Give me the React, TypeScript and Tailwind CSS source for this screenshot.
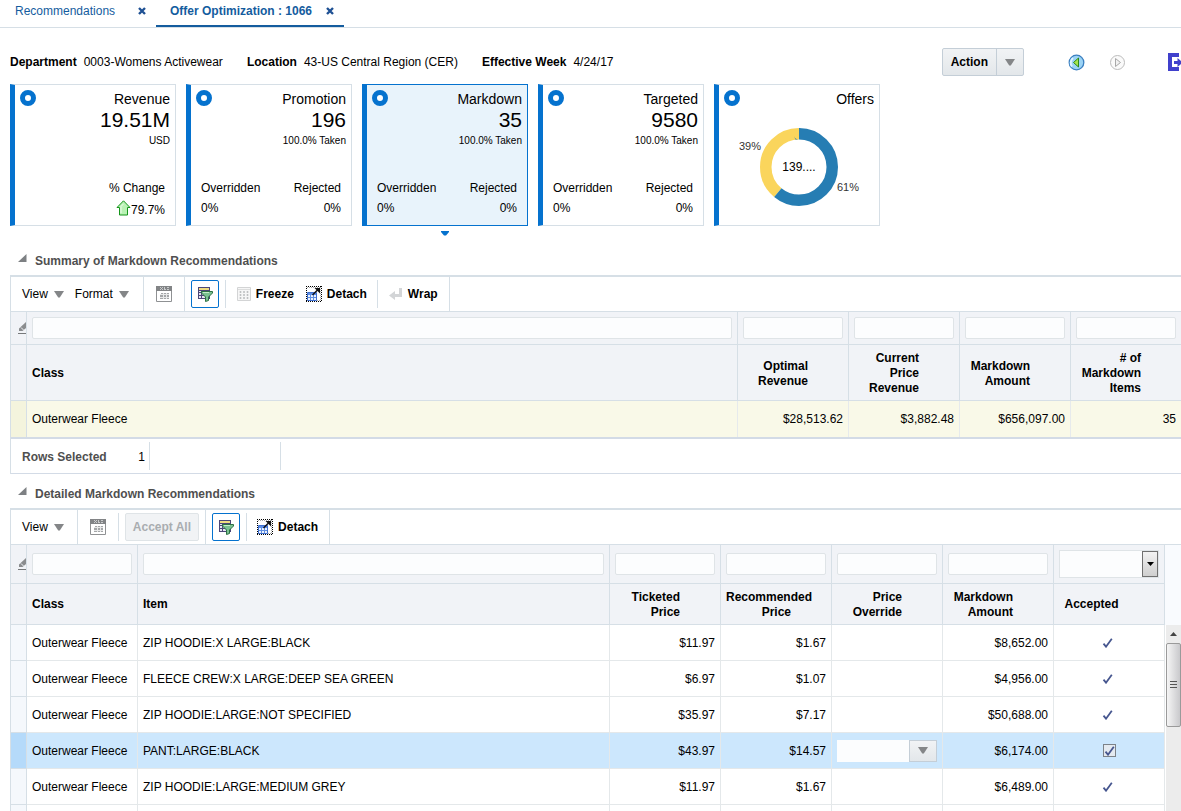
import type { ReactNode } from 'react'

interface StatCardProps {
  title: string
  value: string
  note: string
  selected?: boolean
  children?: ReactNode
}

interface DetailRow {
  item: string
  ticketed: string
  recommended: string
  amount: string
  selected?: boolean
}

const DETAIL_ROWS: DetailRow[] = [
  { item: 'ZIP HOODIE:X LARGE:BLACK', ticketed: '$11.97', recommended: '$1.67', amount: '$8,652.00' },
  { item: 'FLEECE CREW:X LARGE:DEEP SEA GREEN', ticketed: '$6.97', recommended: '$1.07', amount: '$4,956.00' },
  { item: 'ZIP HOODIE:LARGE:NOT SPECIFIED', ticketed: '$35.97', recommended: '$7.17', amount: '$50,688.00' },
  { item: 'PANT:LARGE:BLACK', ticketed: '$43.97', recommended: '$14.57', amount: '$6,174.00', selected: true },
  { item: 'ZIP HOODIE:LARGE:MEDIUM GREY', ticketed: '$11.97', recommended: '$1.67', amount: '$6,489.00' },
]

/* Icons */

function CloseIcon() {
  return (
    <svg width="8" height="8" viewBox="0 0 8 8" aria-hidden="true">
      <path d="M1 1 7 7M7 1 1 7" stroke="#1f5194" strokeWidth="2.4" />
    </svg>
  )
}

function CaretIcon() {
  return (
    <svg width="10" height="7" viewBox="0 0 10 7" aria-hidden="true">
      <path d="M0 0h10L5.8 6.5H4.2z" fill="#848688" />
    </svg>
  )
}

function DiscloseIcon() {
  return (
    <svg width="9" height="8" viewBox="0 0 9 8" aria-hidden="true">
      <path d="M8.5 0v8H0z" fill="#7d8083" />
    </svg>
  )
}

function ExportIcon() {
  return (
    <svg width="16" height="16" viewBox="0 0 16 16" aria-hidden="true">
      <path d="M0 0h16v5H0z" fill="#828486" />
      <path d="M4 1h1v1H4zM6 1h1v1H6zM4 3h1v1H4zM6 3h1v1H6zM5 2h1v1H5zM8 1h1v3H8zM9 3h1v1H9zM11 1h2v1h-2zM11 3h2v1h-2z" fill="#c9cbcc" />
      <path d="M.5 5v10.500h15V5" fill="#fff" stroke="#8f9193" />
      <path d="M5 7h8v6H4V9h1z" fill="#a4a6a8" />
      <path d="M7 7h1v6H7zM10 7h1v6h-1zM4 8h9v1H4zM4 11h9v1H4z" fill="#e8e9e9" />
    </svg>
  )
}

function QueryIcon() {
  return (
    <svg width="16" height="16" viewBox="0 0 16 16" aria-hidden="true">
      <path d="M1 1h12v12H1z" fill="#4b4677" />
      <path d="M2 2h10v2H2z" fill="#f0dc82" />
      <path d="M2 5h2v1H2zM5 5h3v1H5zM9 5h3v1H9zM2 7h2v2H2zM5 7h3v2H5zM2 10h2v2H2zM5 10h3v2H5z" fill="#e6e4f2" />
      <path d="M4.500 5.500h11v1.500L11.500 11v3.500l-3 1V11L4.500 7z" fill="#7bc191" stroke="#2c7043" />
      <path d="M6 6.500h6" stroke="#c5ecc9" />
    </svg>
  )
}

function FreezeIcon() {
  return (
    <svg width="14" height="14" viewBox="0 0 14 14" aria-hidden="true">
      <path d="M.5.5h13v13H.5z" fill="#f6f6f6" stroke="#d3d4d5" />
      <path d="M1 2.500h12" stroke="#dcdddd" />
      <path d="M3.500 4v8M7 4v8M10.500 4v8" stroke="#bfc1c2" strokeWidth="1.600" strokeDasharray="2 1" />
    </svg>
  )
}

function DetachIcon() {
  return (
    <svg width="16" height="16" viewBox="0 0 16 16" aria-hidden="true">
      <path d="M0 .5h16M0 15.500h16M.5 0v16M15.500 0v16" stroke="#000" strokeDasharray="1 1" />
      <path d="M1 1.500h14M1 14.500h14M14.500 1v14" stroke="#000" strokeOpacity=".35" strokeDasharray="1 1" />
      <path d="M1.500 6.500h9v8h-9z" fill="#eaf2ff" stroke="#3e6fd0" />
      <path d="M2 7h8v2H2z" fill="#5b8de6" />
      <path d="M4.500 9v5M7.500 9v5M2 11.500h8" stroke="#5f8ee0" />
      <path d="M6.500 9 12 3.500" stroke="#111" strokeWidth="1.500" />
      <path d="M8.500 2H14v5.500z" fill="#111" />
    </svg>
  )
}

function WrapIcon() {
  return (
    <svg width="14" height="14" viewBox="0 0 14 14" aria-hidden="true">
      <path d="M10 1h3v9H6v3L0 8.500 6 4v3h4z" fill="#d3d5d7" />
    </svg>
  )
}

function PencilIcon() {
  return (
    <svg width="8" height="12" viewBox="0 0 8 12" className="ml-auto" aria-hidden="true">
      <path d="M8 0v6L4.500 9H1V6.500z" fill="#8a8c8e" />
      <path d="M3 5.500 5.500 8" stroke="#f1f3f7" />
      <path d="M0 11.500h8" stroke="#77797b" />
    </svg>
  )
}

function CheckIcon() {
  return (
    <svg width="11" height="11" viewBox="0 0 11 11" aria-hidden="true">
      <path d="M1.500 6.700 4 9.700 9.800 1.700" stroke="#46568f" strokeWidth="1.800" fill="none" />
    </svg>
  )
}

function UpArrowIcon() {
  return (
    <svg width="15" height="16" viewBox="0 0 15 16" aria-hidden="true">
      <path d="M7.500 .8 14 7.500h-2.500v7.500h-8V7.500H1z" fill="#b9f2b4" stroke="#15951b" strokeLinejoin="round" />
      <path d="M5 13V6.500l2.500-2.600" stroke="#effcee" fill="none" />
    </svg>
  )
}

/* Shared parts */

function Divider() {
  return <span className="w-px h-7 bg-[#d6dfe6]" />
}

function FullDivider() {
  return <span className="w-px self-stretch bg-[#d6dfe6]" />
}

function StatCard({ title, value, note, selected, children }: StatCardProps) {
  return (
    <article
      className={`relative flex flex-col justify-between w-[166px] h-[142px] border border-l-[5px] px-[5px] pt-[5px] pb-[7px] ${
        selected ? 'bg-[#e8f3fb] border-[#0572ce]' : 'bg-white border-[#d6dfe6] border-l-[#0572ce]'
      }`}
    >
      <div className="flex items-start justify-between">
        <span className="w-4 h-4 rounded-full border-[5px] border-[#0572ce] bg-white" />
        <div className="text-right">
          <h2 className="text-[14px] leading-[18px]">{title}</h2>
          {value && <p className="text-[21px] leading-6">{value}</p>}
          {note && <p className="text-[10px] leading-[18px]">{note}</p>}
        </div>
      </div>
      {children}
      {selected && (
        <svg width="8" height="5" viewBox="0 0 8 5" className="absolute top-full left-[74px] mt-1.5" aria-hidden="true">
          <path d="M0 0h8v1L5 4.500H3L0 1z" fill="#0572ce" />
        </svg>
      )}
    </article>
  )
}

function TakenBreakdown() {
  return (
    <dl className="flex justify-between px-[5px] leading-5">
      <div>
        <dt>Overridden</dt>
        <dd>0%</dd>
      </div>
      <div className="text-right">
        <dt>Rejected</dt>
        <dd>0%</dd>
      </div>
    </dl>
  )
}

// 61 / 39 split drawn as a yellow ring with a blue arc over it
function OffersChart() {
  return (
    <svg viewBox="0 0 150 90" width="150" height="90" className="self-center mb-1.5" role="img" aria-label="Offers">
      <g transform="rotate(-90 75 45)" fill="none" strokeWidth="11.500">
        <circle cx="75" cy="45" r="33.250" stroke="#fad55c" pathLength="100" strokeDasharray="39 61" strokeDashoffset="39" />
        <circle cx="75" cy="45" r="33.250" stroke="#267db3" pathLength="100" strokeDasharray="61 39" />
      </g>
      <text x="75" y="49" textAnchor="middle" fontSize="12" fill="#000">139....</text>
      <text x="15" y="28" fontSize="11" fill="#333">39%</text>
      <text x="113" y="69" fontSize="11" fill="#333">61%</text>
    </svg>
  )
}

function MenuButton({ label }: { label: string }) {
  return (
    <button type="button" className="flex items-center gap-1.5">
      {label}
      <CaretIcon />
    </button>
  )
}

function IconButton({ icon, label }: { icon: ReactNode; label: string }) {
  return (
    <button type="button" className="flex items-center gap-[5px] font-bold">
      {icon}
      {label}
    </button>
  )
}

function QueryButton() {
  return (
    <button
      type="button"
      aria-label="Query by example"
      className="flex items-center justify-center w-7 h-7 mx-1.5 border border-[#0572ce] rounded-xs"
    >
      <QueryIcon />
    </button>
  )
}

function SectionTitle({ children }: { children: ReactNode }) {
  return (
    <div className="flex items-center h-[30px] gap-2 pl-2">
      <button type="button" aria-label="Collapse" className="pb-1">
        <DiscloseIcon />
      </button>
      <h2 className="pt-0.5 font-bold text-[#4f4f4f]">{children}</h2>
    </div>
  )
}

function FilterCell({ label }: { label: string }) {
  return (
    <td className="border-r border-b border-[#d6dfe6] px-[5px]">
      <input
        type="text"
        aria-label={`Filter ${label}`}
        className="block w-full h-[22px] bg-[#fcfdfe] border border-[#dfe4e7] rounded-xs"
      />
    </td>
  )
}

function PencilCell() {
  return (
    <td className="border-r border-b border-[#d6dfe6]">
      <PencilIcon />
    </td>
  )
}

function NumberHeader({ children }: { children: ReactNode }) {
  return (
    <th scope="col" className="border-r border-b border-[#d6dfe6] pl-[5px] pr-10 pt-0.5 text-right leading-[15px]">
      {children}
    </th>
  )
}

/* Page sections */

function TabBar() {
  return (
    <nav className="flex h-7 border-b border-[#d6dfe6] text-[#145c9e]">
      <div className="flex items-center justify-between w-[156px] pl-[15px] pr-2.5 pb-[5px]">
        <a href="#recommendations">Recommendations</a>
        <button type="button" aria-label="Close Recommendations">
          <CloseIcon />
        </button>
      </div>
      <div className="flex items-center justify-between w-[188px] pl-3.5 pr-2.5 pb-[3px] border-b-2 border-[#145c9e] font-bold">
        <a href="#offer">Offer Optimization : 1066</a>
        <button type="button" aria-label="Close Offer Optimization">
          <CloseIcon />
        </button>
      </div>
    </nav>
  )
}

function PageHeader() {
  return (
    <header className="flex items-center justify-between pt-5 pb-2">
      <dl className="flex gap-6">
        <div className="flex gap-[7px]">
          <dt className="font-bold">Department</dt>
          <dd>0003-Womens Activewear</dd>
        </div>
        <div className="flex gap-[7px]">
          <dt className="font-bold">Location</dt>
          <dd>43-US Central Region (CER)</dd>
        </div>
        <div className="flex gap-[7px]">
          <dt className="font-bold">Effective Week</dt>
          <dd>4/24/17</dd>
        </div>
      </dl>
      <div className="flex items-center">
        <div className="flex h-7 mr-11 border border-[#c4ced7] rounded-xs bg-linear-to-b from-[#f1f3f5] to-[#e3e7ea]">
          <button type="button" className="px-2 font-bold">Action</button>
          <button type="button" aria-label="More actions" className="px-2 border-l border-[#c4ced7]">
            <CaretIcon />
          </button>
        </div>
        <button type="button" aria-label="Previous" className="mr-6">
          <svg width="17" height="17" viewBox="0 0 17 17" aria-hidden="true">
            <circle cx="8.500" cy="8.500" r="7.300" fill="#9bd3f5" stroke="#3a7fc0" strokeWidth="1.300" />
            <path d="M4 12.500a6 6 0 0 1 1-8.500" stroke="#e0f4ff" strokeWidth="2" fill="none" />
            <path d="M10.500 4v9L5.500 8.500z" fill="#a6e34c" stroke="#2c8a1d" />
          </svg>
        </button>
        <button type="button" aria-label="Next" className="mr-[42px]">
          <svg width="17" height="17" viewBox="0 0 17 17" aria-hidden="true">
            <circle cx="8.500" cy="8.500" r="7" fill="#fafafa" stroke="#bcbcbc" />
            <path d="M6.500 4.500v8l5-4z" fill="#f1f1f1" stroke="#a8a8a8" />
          </svg>
        </button>
        <button type="button" aria-label="Exit">
          <svg width="13" height="18" viewBox="0 0 13 18" aria-hidden="true">
            <path d="M0 0h11v4H4v10h7v4H0z" fill="#4040cc" />
            <path d="M6 8h3.500V5L13 8v3l-3.500 3v-3H6z" fill="#4040cc" />
          </svg>
        </button>
      </div>
    </header>
  )
}

function SummarySection() {
  return (
    <section className="pt-[19px]">
      <SectionTitle>Summary of Markdown Recommendations</SectionTitle>
      <div className="border-t-2 border-l border-[#d6dfe6]">
        <div className="flex items-center h-[35px] border-b border-[#d6dfe6]">
          <div className="flex gap-[11px] pl-[11px] pr-3.5">
            <MenuButton label="View" />
            <MenuButton label="Format" />
          </div>
          <FullDivider />
          <button type="button" aria-label="Export to Excel" className="px-3">
            <ExportIcon />
          </button>
          <FullDivider />
          <QueryButton />
          <Divider />
          <div className="flex gap-3 pl-[11px] pr-2.5">
            <IconButton icon={<FreezeIcon />} label="Freeze" />
            <IconButton icon={<DetachIcon />} label="Detach" />
          </div>
          <Divider />
          <div className="pl-[11px] pr-[11px]">
            <IconButton icon={<WrapIcon />} label="Wrap" />
          </div>
          <FullDivider />
        </div>
        <table className="w-full table-fixed border-separate border-spacing-0">
          <colgroup>
            <col className="w-4" />
            <col />
            <col className="w-[111px]" />
            <col className="w-[111px]" />
            <col className="w-[111px]" />
            <col className="w-[110px]" />
          </colgroup>
          <thead className="bg-[#f1f3f7]">
            <tr className="h-[33px]">
              <PencilCell />
              <FilterCell label="Class" />
              <FilterCell label="Optimal Revenue" />
              <FilterCell label="Current Price Revenue" />
              <FilterCell label="Markdown Amount" />
              <td className="border-b border-[#d6dfe6] px-[5px]">
                <input
                  type="text"
                  aria-label="Filter # of Markdown Items"
                  className="block w-full h-[22px] bg-[#fcfdfe] border border-[#dfe4e7] rounded-xs"
                />
              </td>
            </tr>
            <tr className="h-14">
              <td className="border-r border-b border-[#d6dfe6]" />
              <th scope="col" className="border-r border-b border-[#d6dfe6] px-[5px] text-left">Class</th>
              <NumberHeader>Optimal Revenue</NumberHeader>
              <NumberHeader>Current Price Revenue</NumberHeader>
              <NumberHeader>Markdown Amount</NumberHeader>
              <th scope="col" className="border-b border-[#d6dfe6] pl-[5px] pr-10 pt-0.5 text-right leading-[15px]">
                # of Markdown Items
              </th>
            </tr>
          </thead>
          <tbody>
            <tr className="h-9 bg-[#f9f9e8]">
              <td className="border-r border-[#d6dfe6] bg-[#f4f4dd]" />
              <td className="border-r border-[#e6eaec] px-[5px]">Outerwear Fleece</td>
              <td className="border-r border-[#e6eaec] px-[5px] text-right">$28,513.62</td>
              <td className="border-r border-[#e6eaec] px-[5px] text-right">$3,882.48</td>
              <td className="border-r border-[#e6eaec] px-[5px] text-right">$656,097.00</td>
              <td className="px-[5px] text-right">35</td>
            </tr>
          </tbody>
        </table>
        <div className="flex items-center h-[37px] border-t-2 border-b border-[#d3dbe6]">
          <div className="flex justify-between w-[138px] pl-[11px] pr-1 pt-0.5">
            <span className="font-bold text-[#4f4f4f]">Rows Selected</span>
            <span>1</span>
          </div>
          <Divider />
          <span className="w-[130px]" />
          <Divider />
        </div>
      </div>
    </section>
  )
}

function DetailTableRow({ row }: { row: DetailRow }) {
  const cell = 'border-r border-b border-[#e4e8ea] px-[5px]'
  return (
    <tr className={`h-9 ${row.selected ? 'bg-[#cce7fd]' : 'bg-white'}`}>
      <td className={`border-r border-b border-[#d6dfe6] ${row.selected ? 'bg-[#b5dafa]' : 'bg-[#f5f8fc]'}`} />
      <td className={cell}>Outerwear Fleece</td>
      <td className={cell}>{row.item}</td>
      <td className={`${cell} text-right`}>{row.ticketed}</td>
      <td className={`${cell} text-right`}>{row.recommended}</td>
      <td className={cell}>
        {row.selected && (
          <div className="flex h-[22px]">
            <input type="text" aria-label="Price Override" className="min-w-0 flex-1 bg-[#fcfdfe]" />
            <button
              type="button"
              aria-label="Price Override options"
              className="flex items-center justify-center w-7 border border-[#c4ced7] bg-linear-to-b from-[#f1f3f5] to-[#e3e7ea]"
            >
              <CaretIcon />
            </button>
          </div>
        )}
      </td>
      <td className={`${cell} text-right`}>{row.amount}</td>
      <td className={cell}>
        {row.selected ? (
          <span className="relative block w-[13px] h-[13px] ml-11">
            <input
              type="checkbox"
              defaultChecked
              aria-label="Accepted"
              className="block w-[13px] h-[13px] appearance-none border border-[#7c8288] bg-[#e4eaf0]"
            />
            <span className="absolute inset-0 flex items-center justify-center pointer-events-none">
              <CheckIcon />
            </span>
          </span>
        ) : (
          <span className="block ml-[43px]">
            <CheckIcon />
          </span>
        )}
      </td>
    </tr>
  )
}

function DetailSection() {
  return (
    <section className="pt-1">
      <SectionTitle>Detailed Markdown Recommendations</SectionTitle>
      <div className="border-t-2 border-l border-[#d6dfe6]">
        <div className="flex items-center h-[35px] border-b border-[#d6dfe6]">
          <div className="pl-[11px] pr-[13px]">
            <MenuButton label="View" />
          </div>
          <FullDivider />
          <button type="button" aria-label="Export to Excel" className="px-3">
            <ExportIcon />
          </button>
          <Divider />
          <button
            type="button"
            disabled
            className="h-7 mx-1.5 px-[7px] border border-[#dfe4e7] rounded-xs bg-[#f1f3f5] font-bold text-[#a9adb0]"
          >
            Accept All
          </button>
          <FullDivider />
          <QueryButton />
          <Divider />
          <div className="pl-2.5 pr-[11px]">
            <IconButton icon={<DetachIcon />} label="Detach" />
          </div>
          <FullDivider />
        </div>
        <div className="flex">
          <table className="flex-1 w-full table-fixed border-separate border-spacing-0">
            <colgroup>
              <col className="w-4" />
              <col className="w-[111px]" />
              <col />
              <col className="w-[111px]" />
              <col className="w-[111px]" />
              <col className="w-[111px]" />
              <col className="w-[111px]" />
              <col className="w-[111px]" />
            </colgroup>
            <thead className="bg-[#f1f3f7]">
              <tr className="h-[39px]">
                <PencilCell />
                <FilterCell label="Class" />
                <FilterCell label="Item" />
                <FilterCell label="Ticketed Price" />
                <FilterCell label="Recommended Price" />
                <FilterCell label="Price Override" />
                <FilterCell label="Markdown Amount" />
                <td className="border-r border-b border-[#d6dfe6] px-[5px]">
                  <div className="relative">
                    <select
                      aria-label="Filter Accepted"
                      className="block w-full h-7 appearance-none border border-[#dfe4e7] bg-[#fcfdfe]"
                    >
                      <option value=""></option>
                      <option>Yes</option>
                      <option>No</option>
                    </select>
                    <span className="absolute top-px right-px flex items-center justify-center w-4 h-[26px] border border-[#707070] bg-linear-to-b from-[#f2f2f2] to-[#cfcfcf] pointer-events-none">
                      <svg width="7" height="4" viewBox="0 0 7 4" aria-hidden="true">
                        <path d="M0 0h7L3.500 4z" fill="#000" />
                      </svg>
                    </span>
                  </div>
                </td>
              </tr>
              <tr className="h-[41px]">
                <td className="border-r border-b border-[#d6dfe6]" />
                <th scope="col" className="border-r border-b border-[#d6dfe6] px-[5px] text-left">Class</th>
                <th scope="col" className="border-r border-b border-[#d6dfe6] px-[5px] text-left">Item</th>
                <NumberHeader>Ticketed Price</NumberHeader>
                <NumberHeader>Recommended Price</NumberHeader>
                <NumberHeader>Price Override</NumberHeader>
                <NumberHeader>Markdown Amount</NumberHeader>
                <th scope="col" className="border-r border-b border-[#d6dfe6] pl-[5px] pr-10 text-center">
                  Accepted
                </th>
              </tr>
            </thead>
            <tbody>
              {DETAIL_ROWS.map((row) => (
                <DetailTableRow key={row.item} row={row} />
              ))}
              <tr className="h-9">
                <td className="border-r border-[#d6dfe6] bg-[#f5f8fc]" />
                <td className="border-r border-[#e4e8ea]" />
                <td className="border-r border-[#e4e8ea]" />
                <td className="border-r border-[#e4e8ea]" />
                <td className="border-r border-[#e4e8ea]" />
                <td className="border-r border-[#e4e8ea]" />
                <td className="border-r border-[#e4e8ea]" />
                <td className="border-r border-[#e4e8ea]" />
              </tr>
            </tbody>
          </table>

          {/* Scroll bar */}
          <div className="flex flex-col w-4 shrink-0">
            <div className="h-20 bg-[#f9fbfe]" />
            <div className="flex flex-col flex-1 ml-px bg-[#ececec]">
              <button type="button" aria-label="Scroll up" className="flex items-center justify-center h-[18px]">
                <svg width="7" height="4" viewBox="0 0 7 4" aria-hidden="true">
                  <path d="M0 4h7L3.500 0z" fill="#444" />
                </svg>
              </button>
              <div className="flex items-center justify-center h-[84px] border border-[#9a9a9a] rounded-xs bg-linear-to-r from-[#f5f5f5] to-[#c9c9cc]">
                <svg width="7" height="8" viewBox="0 0 7 8" aria-hidden="true">
                  <path d="M0 .5h7M0 3.500h7M0 6.500h7" stroke="#555" />
                </svg>
              </div>
            </div>
          </div>
        </div>
      </div>
    </section>
  )
}

export default function App() {
  return (
    <div className="h-screen overflow-hidden bg-white text-[12px] leading-4 text-black font-['Liberation_Sans',Arial,sans-serif]">
      <TabBar />
      <main className="pl-2.5">
        <PageHeader />
        <div className="flex gap-2.5">
          <StatCard title="Revenue" value="19.51M" note="USD">
            <div className="flex flex-col items-end pr-[5px]">
              <span className="leading-5">% Change</span>
              <span className="flex items-center">
                <UpArrowIcon />
                <span className="pt-1">79.7%</span>
              </span>
            </div>
          </StatCard>
          <StatCard title="Promotion" value="196" note="100.0% Taken">
            <TakenBreakdown />
          </StatCard>
          <StatCard title="Markdown" value="35" note="100.0% Taken" selected>
            <TakenBreakdown />
          </StatCard>
          <StatCard title="Targeted" value="9580" note="100.0% Taken">
            <TakenBreakdown />
          </StatCard>
          <StatCard title="Offers" value="" note="">
            <OffersChart />
          </StatCard>
        </div>
        <SummarySection />
        <DetailSection />
      </main>
    </div>
  )
}
